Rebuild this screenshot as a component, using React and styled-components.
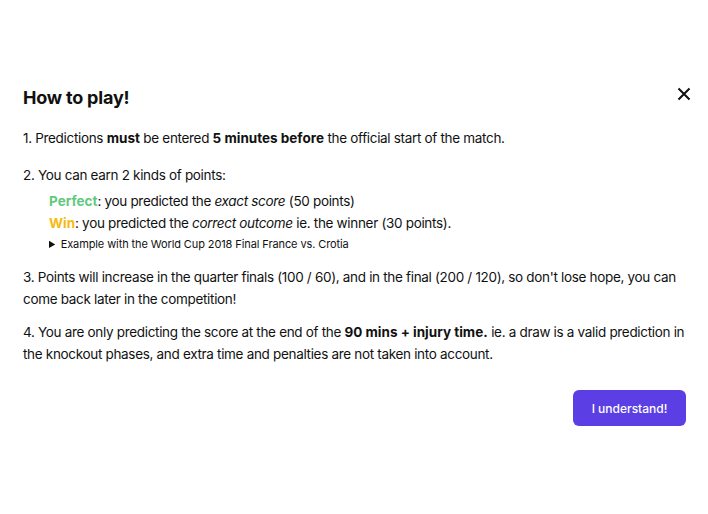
import React from "react";
import styled, { createGlobalStyle } from "styled-components";

const GlobalStyle = createGlobalStyle`
  body {
    margin: 0;
    background: #fff;
    font-family: "Inter", "Open Sans", sans-serif;
    color: #111;
  }
`;

const Modal = styled.div`
  width: 708px;
  height: 514px;
  box-sizing: border-box;
  padding: 86px 20px 0 23px;
  display: flex;
  flex-direction: column;
`;

const Header = styled.div`
  display: flex;
  justify-content: space-between;
  align-items: flex-start;
  margin-bottom: 17px;
`;

const Title = styled.h2`
  margin: 0;
  font-size: 18px;
  line-height: 24px;
  font-weight: 700;
  letter-spacing: -0.2px;
`;

const Close = styled.button`
  background: none;
  border: none;
  padding: 0;
  margin: 1px -3px 0 0;
  width: 14px;
  height: 14px;
  display: flex;
  cursor: pointer;
`;

const Para = styled.p`
  margin: 0 0 ${(p) => p.$gap || 11}px;
  font-size: 13.5px;
  line-height: 22px;
  letter-spacing: -0.32px;
  b {
    letter-spacing: 0;
  }
`;

const Kinds = styled.div`
  display: flex;
  flex-direction: column;
  padding-left: 26px;
  margin-bottom: 12px;
`;

const Kind = styled.div`
  font-size: 13.5px;
  line-height: 22px;
  letter-spacing: -0.32px;
`;

const Label = styled.b`
  color: ${(p) => p.$color};
  letter-spacing: 0;
`;

const Example = styled.details`
  font-size: 11px;
  line-height: 20px;
  letter-spacing: -0.1px;
  summary {
    cursor: pointer;
  }
`;

const Footer = styled.div`
  display: flex;
  justify-content: flex-end;
  margin-top: 14px;
  padding-right: 2px;
`;

const Button = styled.button`
  background: #5b3ee4;
  color: #fff;
  border: none;
  border-radius: 6px;
  width: 113px;
  height: 36px;
  font-family: inherit;
  font-size: 12px;
  font-weight: 500;
  cursor: pointer;
`;

export default function App() {
  return (
    <>
      <GlobalStyle />
      <Modal>
        <Header>
          <Title>How to play!</Title>
          <Close aria-label="close">
            <svg width="14" height="14" viewBox="0 0 14 14">
              <path d="M1.5 1.5 L12.5 12.5 M12.5 1.5 L1.5 12.5" stroke="#111" strokeWidth="2" />
            </svg>
          </Close>
        </Header>
        <Para $gap={15}>
          1. Predictions <b>must</b> be entered <b>5 minutes before</b> the official start of the match.
        </Para>
        <Para $gap={4}>2. You can earn 2 kinds of points:</Para>
        <Kinds>
          <Kind>
            <Label $color="#5fc97e">Perfect</Label>: you predicted the <i>exact score</i> (50 points)
          </Kind>
          <Kind>
            <Label $color="#f5bb12">Win</Label>: you predicted the <i>correct outcome</i> ie. the winner (30 points).
          </Kind>
          <Example>
            <summary>Example with the World Cup 2018 Final France vs. Crotia</summary>
          </Example>
        </Kinds>
        <Para>
          3. Points will increase in the quarter finals (100 / 60), and in the final (200 / 120), so don't lose hope, you can come back later in the competition!
        </Para>
        <Para>
          4. You are only predicting the score at the end of the <b>90 mins + injury time.</b> ie. a draw is a valid prediction in the knockout phases, and extra time and penalties are not taken into account.
        </Para>
        <Footer>
          <Button>I understand!</Button>
        </Footer>
      </Modal>
    </>
  );
}
